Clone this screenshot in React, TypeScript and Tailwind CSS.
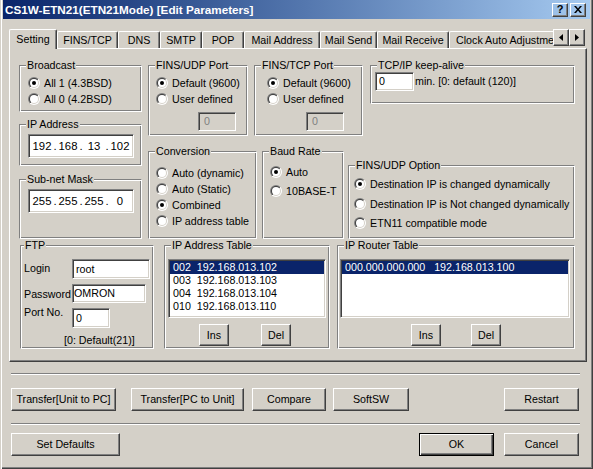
import React from "react";

const raised =
  "border border-t-white border-l-white border-r-[#404040] border-b-[#404040] shadow-[inset_-1px_-1px_0_#808080]";
const sunken =
  "border border-t-[#808080] border-l-[#808080] border-r-white border-b-white shadow-[inset_1px_1px_0_#404040,inset_-1px_-1px_0_#D4D0C8]";
const etched =
  "border border-t-[#808080] border-l-[#808080] border-r-white border-b-white shadow-[inset_1px_1px_0_#fff,inset_-1px_-1px_0_#808080]";

function Radio({ checked, label, className = "" }: { checked?: boolean; label: string; className?: string }) {
  return (
    <div className={`flex items-center h-[16px] whitespace-nowrap ${className}`}>
      <svg width="12" height="12" viewBox="0 0 12 12" className="shrink-0">
        <defs>
          <linearGradient id="rgA" x1="0" y1="0" x2="1" y2="1">
            <stop offset="0.5" stopColor="#808080" />
            <stop offset="0.5" stopColor="#ffffff" />
          </linearGradient>
          <linearGradient id="rgB" x1="0" y1="0" x2="1" y2="1">
            <stop offset="0.5" stopColor="#404040" />
            <stop offset="0.5" stopColor="#d4d0c8" />
          </linearGradient>
        </defs>
        <circle cx="6" cy="6" r="6" fill="url(#rgA)" />
        <circle cx="6" cy="6" r="5" fill="url(#rgB)" />
        <circle cx="6" cy="6" r="4" fill="#ffffff" />
        {checked && <circle cx="6" cy="6" r="2" fill="#000000" />}
      </svg>
      <span className="ml-[4px] leading-[13px]">{label}</span>
    </div>
  );
}

function Group({
  label,
  className = "",
  labelClass = "left-[6px]",
  children,
}: {
  label: string;
  className?: string;
  labelClass?: string;
  children?: React.ReactNode;
}) {
  return (
    <div className={`relative shrink-0 ${etched} ${className}`}>
      <span className={`absolute -top-[7px] ${labelClass} px-[1px] bg-[#D4D0C8] leading-[13px] whitespace-nowrap`}>
        {label}
      </span>
      {children}
    </div>
  );
}

function Edit({
  className = "",
  disabled,
  children,
}: {
  className?: string;
  disabled?: boolean;
  children?: React.ReactNode;
}) {
  return (
    <div
      className={`shrink-0 ${sunken} ${
        disabled ? "bg-[#D4D0C8] text-[#808080]" : "bg-white"
      } flex items-center leading-[13px] whitespace-nowrap ${className}`}
    >
      {children}
    </div>
  );
}

function Btn({ className = "", def, children }: { className?: string; def?: boolean; children: React.ReactNode }) {
  return (
    <div
      className={`shrink-0 flex items-center justify-center leading-[13px] whitespace-nowrap ${
        def
          ? "border border-black shadow-[inset_1px_1px_0_#fff,inset_-1px_-1px_0_#404040,inset_-2px_-2px_0_#808080]"
          : raised
      } ${className}`}
    >
      {children}
    </div>
  );
}

function IpField({ parts }: { parts: string[] }) {
  return (
    <Edit className="w-[106px] h-[24px] pl-[2px] text-[11.3px]">
      {parts.map((p, i) => (
        <React.Fragment key={i}>
          {i > 0 && <span className="w-[4px] text-center">.</span>}
          <span className="w-[22px] text-center">{p}</span>
        </React.Fragment>
      ))}
    </Edit>
  );
}

function Tab({ label, className = "" }: { label: string; className?: string }) {
  return (
    <div
      className={`shrink-0 h-[17px] mb-[1px] flex items-center justify-center whitespace-nowrap rounded-t-[2px] ${raised} border-b-0 shadow-[inset_-1px_0_0_#808080] ${className}`}
    >
      {label}
    </div>
  );
}

export default function App() {
  const ipRows = [
    "002  192.168.013.102",
    "003  192.168.013.103",
    "004  192.168.013.104",
    "010  192.168.013.110",
  ];
  return (
    <div className="w-[593px] h-[469px] bg-[#D4D0C8] flex flex-col overflow-hidden text-[10.7px] text-black font-['Liberation_Sans',Arial,sans-serif] shadow-[inset_1px_0_0_#D4D0C8,inset_2px_0_0_#fff,inset_-1px_-1px_0_#404040,inset_-2px_-2px_0_#808080]">
      {/* Title bar */}
      <div className="ml-[3px] w-[587px] h-[19px] shrink-0 bg-linear-to-r from-[#0A246A] to-[#A6CAF0] flex items-center pl-[2px] pr-[4px]">
        <span className="text-white font-bold text-[11.7px] leading-[14px] whitespace-nowrap">
          CS1W-ETN21(ETN21Mode) [Edit Parameters]
        </span>
        <div className="ml-auto flex items-center gap-[2px]">
          <div className={`w-[16px] h-[14px] ${raised} flex items-center justify-center font-bold text-[11px] leading-[11px]`}>
            ?
          </div>
          <div className={`w-[16px] h-[14px] ${raised} flex items-center justify-center`}>
            <svg width="8" height="7" viewBox="0 0 8 7">
              <path d="M0 0h2l2 2.5L6 0h2L5 3.5 8 7H6L4 4.5 2 7H0l3-3.5z" fill="#000" />
            </svg>
          </div>
        </div>
      </div>

      {/* Tab row */}
      <div className="ml-[9px] mr-[8px] mt-[10px] h-[20px] shrink-0 flex items-end relative z-10">
        <div className="flex-1 min-w-0 h-full overflow-hidden flex items-end">
          <div className="shrink-0 w-[48px] h-[20px] bg-[#D4D0C8] flex items-center justify-center rounded-t-[2px] border-l border-t border-white border-r border-r-[#404040] shadow-[inset_-1px_0_0_#808080] pb-[1px]">
            Setting
          </div>
          <Tab label="FINS/TCP" className="w-[61px]" />
          <Tab label="DNS" className="w-[42px]" />
          <Tab label="SMTP" className="w-[42px]" />
          <Tab label="POP" className="w-[42px]" />
          <Tab label="Mail Address" className="w-[76px]" />
          <Tab label="Mail Send" className="w-[57px]" />
          <Tab label="Mail Receive" className="w-[72px]" />
          <Tab label="Clock Auto Adjustment" className="w-[120px] !justify-start pl-[6px]" />
        </div>
        <div className="self-start flex shrink-0">
          <div className={`w-[16px] h-[17px] ${raised} flex items-center justify-center`}>
            <svg width="4" height="7" viewBox="0 0 4 7">
              <path d="M4 0v7L0 3.5z" fill="#000" />
            </svg>
          </div>
          <div className={`w-[16px] h-[17px] ${raised} flex items-center justify-center`}>
            <svg width="4" height="7" viewBox="0 0 4 7">
              <path d="M0 0v7l4-3.5z" fill="#000" />
            </svg>
          </div>
        </div>
      </div>

      {/* Tab panel */}
      <div className="-mt-[1px] ml-[9px] w-[578px] h-[314px] shrink-0 border border-t-white border-l-white border-r-[#404040] border-b-[#404040] shadow-[inset_-1px_-1px_0_#808080]">
        <div className="pl-[9px] pt-[16px] flex flex-col">
          <div className="flex items-start">
            {/* Column A */}
            <div className="flex flex-col w-[123px] shrink-0">
              <Group label="Broadcast" className="w-[123px] h-[47px] pl-[8px] pt-[9px]">
                <Radio checked label="All 1 (4.3BSD)" />
                <Radio label="All 0 (4.2BSD)" />
              </Group>
              <Group label="IP Address" className="mt-[12px] w-[123px] h-[42px] pl-[8px] pt-[9px]">
                <IpField parts={["192", "168", "13", "102"]} />
              </Group>
              <Group label="Sub-net Mask" className="mt-[13px] w-[123px] h-[60px] pl-[8px] pt-[9px]">
                <IpField parts={["255", "255", "255", "0"]} />
              </Group>
            </div>

            <div className="ml-[6px] flex flex-col">
              <div className="flex items-start">
                <Group label="FINS/UDP Port" className="w-[100px] h-[71px] pl-[7px] pt-[9px]">
                  <Radio checked label="Default (9600)" />
                  <Radio label="User defined" />
                  <Edit disabled className="ml-[42px] mt-[5px] w-[38px] h-[19px] pl-[5px]">
                    0
                  </Edit>
                </Group>
                <Group label="FINS/TCP Port" className="ml-[6px] w-[109px] h-[71px] pl-[12px] pt-[9px]">
                  <Radio checked label="Default (9600)" />
                  <Radio label="User defined" />
                  <Edit disabled className="ml-[39px] mt-[5px] w-[38px] h-[19px] pl-[5px]">
                    0
                  </Edit>
                </Group>
                <Group label="TCP/IP keep-alive" className="ml-[7px] w-[205px] h-[39px] pl-[4px] pt-[6px]">
                  <div className="flex items-center whitespace-nowrap">
                    <Edit className="w-[39px] h-[19px] pl-[3px]">0</Edit>
                    <span className="ml-[1px] leading-[13px]">min.</span>
                    <span className="ml-[3px] leading-[13px]">[0: default (120)]</span>
                  </div>
                </Group>
              </div>
              <div className="flex items-start mt-[15px]">
                <Group label="Conversion" className="w-[109px] h-[88px] pl-[7px] pt-[13px]">
                  <Radio label="Auto (dynamic)" />
                  <Radio label="Auto (Static)" />
                  <Radio checked label="Combined" />
                  <Radio label="IP address table" />
                </Group>
                <Group label="Baud Rate" className="ml-[5px] w-[82px] h-[88px] pl-[7px] pt-[12px]">
                  <Radio checked label="Auto" />
                  <Radio label="10BASE-T" className="mt-[3px]" />
                </Group>
                <Group label="FINS/UDP Option" className="ml-[4px] mt-[14px] w-[227px] h-[74px] pl-[5px] pt-[10px]">
                  <Radio checked label="Destination IP is changed dynamically" />
                  <Radio label="Destination IP is Not changed dynamically" className="mt-[4px]" />
                  <Radio label="ETN11 compatible mode" className="mt-[3px]" />
                </Group>
              </div>
            </div>
          </div>

          {/* Bottom row */}
          <div className="flex items-start mt-[6px] ml-[1px]">
            <Group label="FTP" labelClass="left-[3px]" className="w-[134px] h-[104px] pl-[3px] pt-[13px]">
              <div className="flex flex-col">
                <div className="flex items-start">
                  <span className="w-[48px] shrink-0 mt-[3px] leading-[13px] whitespace-nowrap">Login</span>
                  <Edit className="w-[78px] h-[20px] pl-[3px]">root</Edit>
                </div>
                <div className="flex items-start mt-[5px]">
                  <span className="w-[48px] shrink-0 mt-[4px] leading-[13px] whitespace-nowrap">Password</span>
                  <Edit className="w-[74px] h-[19px] pl-[1px]">OMRON</Edit>
                </div>
                <div className="flex items-start mt-[5px]">
                  <span className="w-[48px] shrink-0 -mt-[2px] leading-[13px] whitespace-nowrap">Port No.</span>
                  <Edit className="w-[38px] h-[20px] pl-[3px]">0</Edit>
                </div>
                <div className="ml-[40px] mt-[6px] leading-[13px] whitespace-nowrap">[0: Default(21)]</div>
              </div>
            </Group>

            <Group label="IP Address Table" className="ml-[10px] w-[166px] h-[104px] pl-[3px] pt-[13px]">
              <div className={`w-[158px] h-[59px] ${sunken} bg-white p-[1px] flex flex-col`}>
                {ipRows.map((r, i) => (
                  <div
                    key={r}
                    className={`h-[13px] leading-[13px] pl-[3px] whitespace-pre ${
                      i === 0 ? "bg-[#0A246A] text-white" : ""
                    }`}
                  >
                    {r}
                  </div>
                ))}
              </div>
              <div className="flex mt-[6px]">
                <Btn className="ml-[31px] w-[30px] h-[22px]">Ins</Btn>
                <Btn className="ml-[32px] w-[30px] h-[22px]">Del</Btn>
              </div>
            </Group>

            <Group label="IP Router Table" className="ml-[7px] w-[238px] h-[104px] pl-[2px] pt-[13px]">
              <div className={`w-[230px] h-[59px] ${sunken} bg-white p-[1px] flex flex-col`}>
                <div className="h-[13px] leading-[13px] pl-[3px] whitespace-pre bg-[#0A246A] text-white">
                  {"000.000.000.000   192.168.013.100"}
                </div>
              </div>
              <div className="flex mt-[6px]">
                <Btn className="ml-[71px] w-[30px] h-[22px]">Ins</Btn>
                <Btn className="ml-[30px] w-[30px] h-[22px]">Del</Btn>
              </div>
            </Group>
          </div>
        </div>
      </div>

      {/* Separator 1 */}
      <div className="mt-[11px] ml-[11px] w-[569px] h-[2px] shrink-0 border-t border-t-[#808080] border-b border-b-white" />

      {/* Buttons row 1 */}
      <div className="mt-[13px] ml-[11px] mr-[14px] h-[23px] shrink-0 flex">
        <Btn className="w-[105px] h-[23px]">Transfer[Unit to PC]</Btn>
        <Btn className="ml-[15px] w-[113px] h-[23px]">Transfer[PC to Unit]</Btn>
        <Btn className="ml-[8px] w-[74px] h-[23px]">Compare</Btn>
        <Btn className="ml-[7px] w-[76px] h-[23px]">SoftSW</Btn>
        <Btn className="ml-auto w-[75px] h-[23px]">Restart</Btn>
      </div>

      {/* Separator 2 */}
      <div className="mt-[12px] ml-[11px] w-[569px] h-[2px] shrink-0 border-t border-t-[#808080] border-b border-b-white" />

      {/* Buttons row 2 */}
      <div className="mt-[8px] ml-[11px] mr-[14px] h-[23px] shrink-0 flex">
        <Btn className="w-[109px] h-[23px]">Set Defaults</Btn>
        <Btn def className="ml-auto w-[75px] h-[23px]">
          OK
        </Btn>
        <Btn className="ml-[10px] w-[75px] h-[23px]">Cancel</Btn>
      </div>
    </div>
  );
}
